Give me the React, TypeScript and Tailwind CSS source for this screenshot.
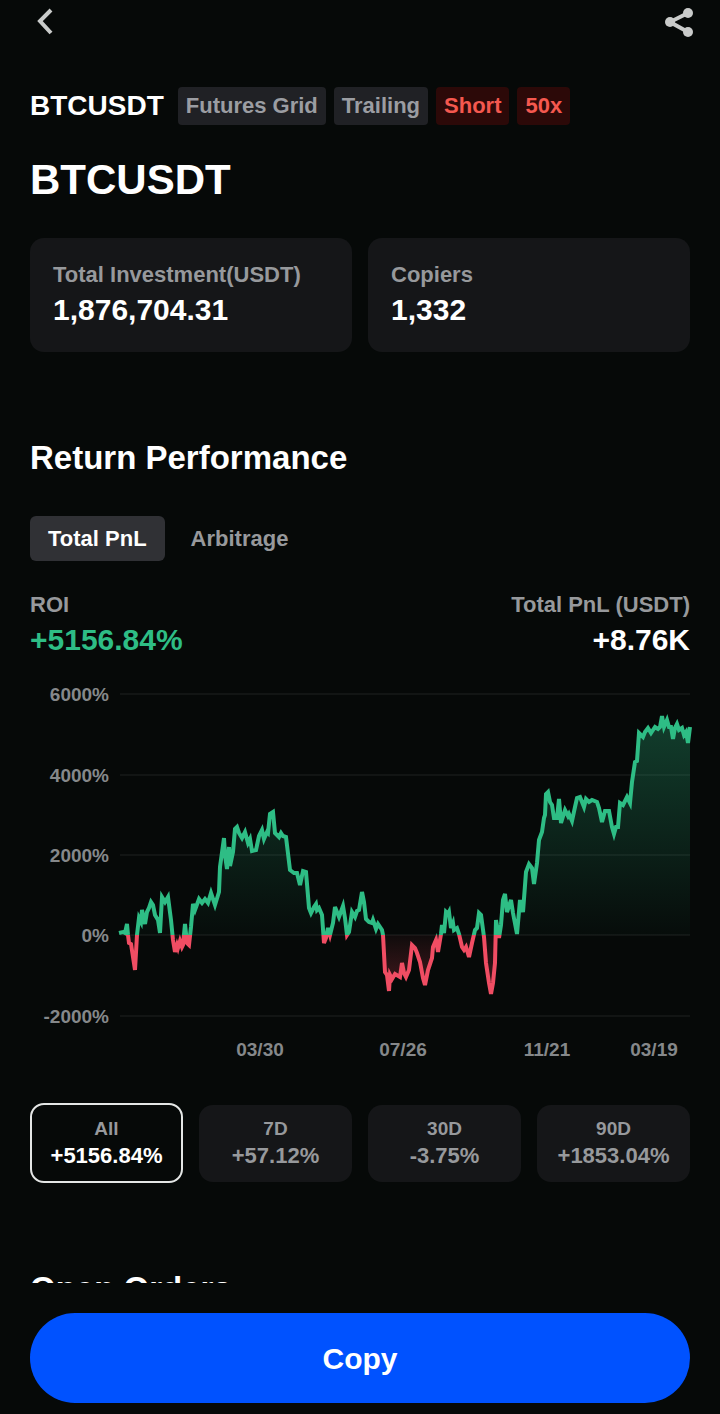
import { useState } from "react"
import clsx from "clsx"

const tags = [
  { label: "Futures Grid", danger: false },
  { label: "Trailing", danger: false },
  { label: "Short", danger: true },
  { label: "50x", danger: true },
]

const stats = [
  { label: "Total Investment(USDT)", value: "1,876,704.31" },
  { label: "Copiers", value: "1,332" },
]

const tabs = ["Total PnL", "Arbitrage"]

const ranges = [
  { label: "All", value: "+5156.84%" },
  { label: "7D", value: "+57.12%" },
  { label: "30D", value: "-3.75%" },
  { label: "90D", value: "+1853.04%" },
]

const yTicks = [
  { label: "6000%", y: 0 },
  { label: "4000%", y: 81 },
  { label: "2000%", y: 161 },
  { label: "0%", y: 241 },
  { label: "-2000%", y: 322 },
]

const xTicks = [
  { label: "03/30", x: 140 },
  { label: "07/26", x: 283 },
  { label: "11/21", x: 427 },
  { label: "03/19", x: 534 },
]

// ROI curve inside the plot area, zero line is at y = 241
const ZERO = 241
const curve =
  "-1,239 3,238 5,239 7,230 8,241 9,249 11,250 15,276 17,241 19,224 21,228 22,216 25,230 27,218 29,214 31,208 33,211 35,221 38,226 40,239 " +
  "42,203 45,208 48,203 51,226 53,246 55,258 57,251 58,254 60,247 62,253 63,251 65,230 67,249 69,251 71,233 73,210 75,216 79,205 82,209 " +
  "85,205 88,209 91,199 95,211 99,198 100,173 104,144 105,161 107,175 109,153 110,172 113,158 115,135 117,133 119,139 122,144 125,138 " +
  "128,149 130,145 132,157 136,156 139,142 142,136 144,145 147,138 148,139 150,120 153,118 155,139 159,143 161,139 163,142 166,143 " +
  "170,176 174,179 177,179 180,191 183,177 186,178 189,214 191,219 194,213 196,210 197,216 199,214 202,221 204,249 206,244 208,234 " +
  "210,241 213,229 215,213 219,223 223,212 225,224 227,241 229,238 232,218 235,223 237,217 239,216 242,198 244,208 246,225 249,228 " +
  "252,229 253,226 256,235 258,230 262,236 263,241 265,278 267,281 269,297 270,281 272,285 275,280 280,283 282,269 284,279 286,283 " +
  "289,276 292,251 295,254 297,259 300,268 303,284 305,291 308,276 312,264 313,253 316,246 318,258 321,240 322,231 324,239 326,218 " +
  "328,220 329,218 331,234 333,229 334,236 337,234 339,240 342,253 344,256 346,253 349,263 352,249 355,236 357,234 359,219 361,221 " +
  "364,243 366,269 369,289 371,300 373,289 375,269 376,226 379,244 381,231 383,206 385,200 387,218 391,206 393,219 397,240 400,206 " +
  "403,218 406,178 409,170 412,174 414,190 417,169 419,146 422,138 424,124 425,121 426,100 428,98 430,108 432,111 434,124 437,124 " +
  "439,105 441,129 445,116 448,122 449,120 452,127 455,113 457,104 460,103 462,108 464,113 466,105 469,108 472,106 477,108 479,114 " +
  "482,128 485,117 489,117 492,133 494,140 496,133 498,133 500,109 503,111 507,103 510,109 512,88 515,68 517,67 519,39 523,43 525,38 " +
  "528,34 531,39 535,33 538,35 540,33 542,22 544,33 547,26 549,33 551,33 553,45 555,34 557,30 559,36 562,34 564,41 566,38 568,49 570,33"

function RoiChart() {
  const area = `-1,${ZERO} ${curve} 570,${ZERO}`

  return (
    <svg viewBox="0 0 660 385" className="mt-5 block w-full overflow-visible" role="img" aria-label="ROI chart">
      <defs>
        <clipPath id="above">
          <rect x="-10" y="-14" width="590" height="255" />
        </clipPath>
        <clipPath id="below">
          <rect x="-10" y="241" width="590" height="90" />
        </clipPath>
        <linearGradient id="gain" gradientUnits="userSpaceOnUse" x1="0" y1="20" x2="0" y2="241">
          <stop offset="0" stopColor="#2ebd85" stopOpacity="0.3" />
          <stop offset="1" stopColor="#2ebd85" stopOpacity="0.02" />
        </linearGradient>
        <linearGradient id="loss" gradientUnits="userSpaceOnUse" x1="0" y1="241" x2="0" y2="300">
          <stop offset="0" stopColor="#f6465d" stopOpacity="0.04" />
          <stop offset="1" stopColor="#f6465d" stopOpacity="0.28" />
        </linearGradient>
      </defs>
      <g transform="translate(90 14)">
        {yTicks.map((tick) => (
          <g key={tick.label}>
            <line x1="0" x2="570" y1={tick.y} y2={tick.y} stroke="#121514" strokeWidth="2" />
            <text x="-11" y={tick.y + 7} textAnchor="end" className="fill-[#85888a] text-[19px] font-bold">
              {tick.label}
            </text>
          </g>
        ))}
        <g clipPath="url(#above)">
          <polygon points={area} fill="url(#gain)" />
          <polyline points={curve} fill="none" stroke="#2ebd85" strokeWidth="4" />
        </g>
        <g clipPath="url(#below)">
          <polygon points={area} fill="url(#loss)" />
          <polyline points={curve} fill="none" stroke="#f04d63" strokeWidth="4" />
        </g>
        {xTicks.map((tick) => (
          <text key={tick.label} x={tick.x} y="362" textAnchor="middle" className="fill-[#85888a] text-[19px] font-bold">
            {tick.label}
          </text>
        ))}
      </g>
    </svg>
  )
}

export default function App() {
  const [tab, setTab] = useState("Total PnL")
  const [range, setRange] = useState("All")

  return (
    <div className="flex h-dvh flex-col bg-[#060908] font-['Liberation_Sans',Arial,sans-serif] font-bold text-white">
      <header className="flex h-11 shrink-0 items-center justify-between px-[26px]">
        <button aria-label="Back" className="flex size-10 items-center justify-center text-[#c9cbca]">
          <svg viewBox="0 0 40 40" className="size-10" fill="none" stroke="currentColor" strokeWidth="4">
            <path d="M25 8 14 19 25 31" />
          </svg>
        </button>
        <button aria-label="Share" className="flex size-8 items-center justify-center text-[#c9cbca]">
          <svg viewBox="0 0 32 32" className="size-8" fill="currentColor">
            <path d="M26 7 8 16 26 26" fill="none" stroke="currentColor" strokeWidth="4" />
            <circle cx="26" cy="7" r="5" />
            <circle cx="8" cy="16" r="5" />
            <circle cx="26" cy="26" r="5" />
          </svg>
        </button>
      </header>

      <main className="min-h-0 flex-1 overflow-y-auto px-[30px] pt-[43px] [scrollbar-width:none]">
        <div className="flex flex-wrap items-center gap-2">
          <span className="mr-1.5 text-[28px] leading-[38px]">BTCUSDT</span>
          {tags.map((tag) => (
            <span
              key={tag.label}
              className={clsx(
                "rounded-sm px-2 text-[22px] leading-[38px]",
                tag.danger ? "bg-[#2c0908] text-[#f4584f]" : "bg-[#202125] text-[#9b9da2]"
              )}
            >
              {tag.label}
            </span>
          ))}
        </div>
        <h1 className="mt-[31px] text-[42px] leading-[48px]">BTCUSDT</h1>

        <div className="mt-[34px] grid grid-cols-2 gap-4">
          {stats.map((stat) => (
            <div key={stat.label} className="rounded-[14px] bg-[#151618] px-[23px] py-[22px]">
              <p className="text-[22px] leading-[30px] text-[#97999c]">{stat.label}</p>
              <p className="text-[30px] leading-[40px]">{stat.value}</p>
            </div>
          ))}
        </div>

        <h2 className="mt-[86px] text-[33px] leading-[40px]">Return Performance</h2>

        <div className="mt-[38px] flex gap-2">
          {tabs.map((item) => (
            <button
              key={item}
              onClick={() => setTab(item)}
              className={clsx(
                "rounded-md px-[18px] text-[22px] leading-[45px]",
                tab === item ? "bg-[#303135] text-white" : "text-[#97999c]"
              )}
            >
              {item}
            </button>
          ))}
        </div>

        <div className="mt-[29px] flex justify-between">
          <div>
            <p className="text-[22px] leading-[30px] text-[#97999c]">ROI</p>
            <p className="text-[30px] leading-[40px] text-[#2ebd85]">+5156.84%</p>
          </div>
          <div className="text-right">
            <p className="text-[22px] leading-[30px] text-[#97999c]">Total PnL (USDT)</p>
            <p className="text-[30px] leading-[40px]">+8.76K</p>
          </div>
        </div>

        <RoiChart />

        <div className="mt-[38px] grid grid-cols-4 items-center gap-4">
          {ranges.map((item) => (
            <button
              key={item.label}
              onClick={() => setRange(item.label)}
              className={clsx(
                "flex flex-col items-center justify-center rounded-[14px]",
                range === item.label ? "h-20 border-2 border-[#e4e6e5] text-white" : "h-[77px] bg-[#151618] text-[#97999c]"
              )}
            >
              <span className="text-[19px] leading-[26px] text-[#97999c]">{item.label}</span>
              <span className="text-[22px] leading-[28px]">{item.value}</span>
            </button>
          ))}
        </div>

        <h2 className="mt-[86px] text-[33px] leading-[40px]">Open Orders</h2>
      </main>

      <footer className="shrink-0 px-[30px] pt-[30px] pb-[11px]">
        <button className="h-[90px] w-full rounded-full bg-[#0052ff] text-[30px]">Copy</button>
      </footer>
    </div>
  )
}
